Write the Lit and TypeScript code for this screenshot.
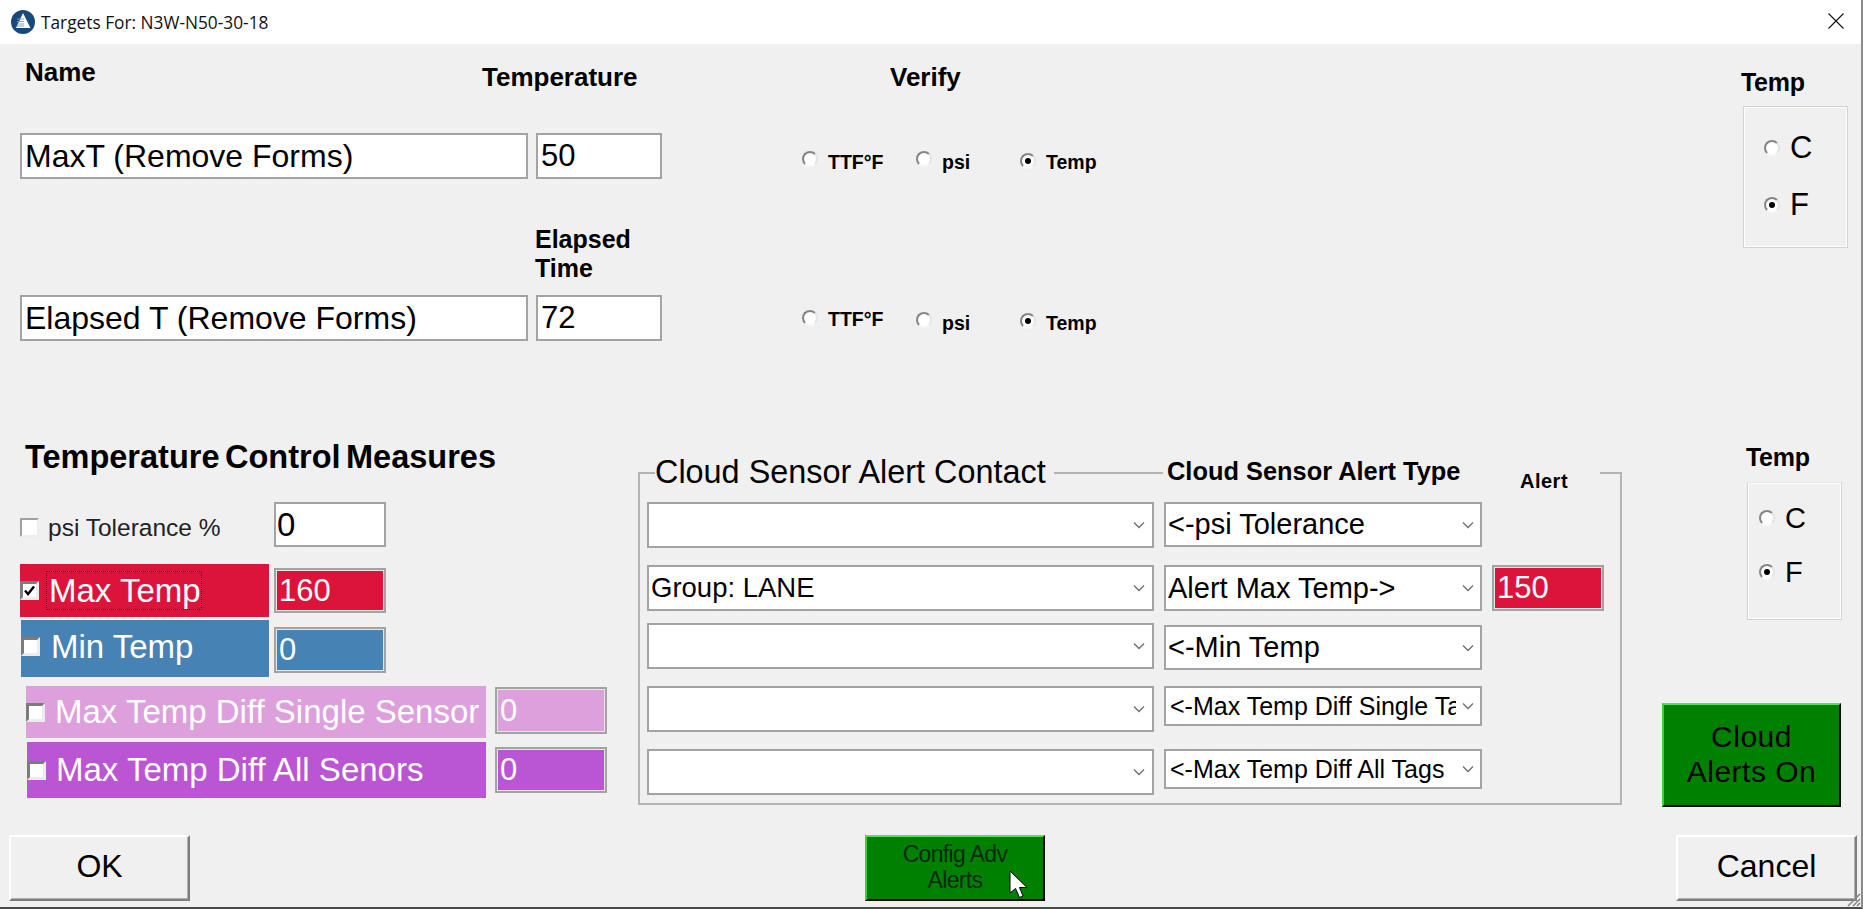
import { LitElement, html, css, svg } from "lit";
import { customElement } from "lit/decorators.js";

const chevron = html`<svg class="chev" width="12" height="8" viewBox="0 0 12 8"><path d="M1 1.5 L6 6.5 L11 1.5" fill="none" stroke="#6e6e6e" stroke-width="1.3"/></svg>`;

@customElement("app-root")
export class AppRoot extends LitElement {
  static styles = css`
    :host { display: block; width: 1863px; height: 909px; font-family: "Liberation Sans", Arial, sans-serif; color: #000; background: #f0f0f0; overflow: hidden; }
    * { box-sizing: border-box; }
    .window { width: 1863px; height: 909px; display: flex; flex-direction: column; border-right: 2px solid #8c8c8c; border-bottom: 2px solid #4a4a4a; position: relative; overflow: hidden; }
    .title { height: 44px; background: #fff; display: flex; align-items: center; flex: none; }
    .logo { margin-left: 11px; flex: none; }
    .title span { margin-left: 6px; font-family: "Open Sans", sans-serif; font-size: 17.3px; color: #111; }
    .close { margin-left: auto; margin-right: 17px; margin-top: -3px; }

    .upper { height: 395px; display: flex; justify-content: space-between; flex: none; }
    .targets { padding-left: 20px; display: flex; flex-direction: column; }
    .b { font-weight: 700; }
    .h { font-size: 26px; line-height: 30px; white-space: nowrap; }
    .head1 { height: 89px; display: flex; align-items: flex-start; }
    .name-lbl { margin-left: 5px; margin-top: 13px; width: 457px; }
    .temp-lbl { margin-top: 18px; width: 408px; }
    .verify-lbl { margin-top: 18px; }
    .head2 { height: 116px; padding: 46px 0 0 515px; }
    .head2 div { font-size: 25px; line-height: 29px; }
    .row { display: flex; height: 46px; }
    input { display: block; font-family: inherit; padding: 0 0 0 3px; margin: 0; outline: none; background: #fff; color: #000; border: 2px solid #a3a3a3; border-radius: 0; }
    .name { width: 508px; height: 46px; font-size: 32px; margin-right: 8px; }
    .val { width: 126px; height: 46px; font-size: 31px; margin-right: 140px; }
    .opt { display: flex; align-items: flex-start; height: 46px; font-weight: 700; font-size: 19.5px; line-height: 22px; }
    .w-ttf { width: 114px; }
    .w-psi { width: 104px; }
    .opt .radio { margin-right: 10px; }
    .m13 { margin-top: 13px; } .m15 { margin-top: 15px; } .m17 { margin-top: 17px; }
    .m18 { margin-top: 18px; } .m20 { margin-top: 20px; }

    .radio { width: 16px; height: 16px; flex: none; border-radius: 50%; background: #fff; border: 2px solid; border-color: #858585 #e4e4e4 #f7f7f7 #858585; display: flex; align-items: center; justify-content: center; }
    .radio.on::after { content: ""; width: 6px; height: 6px; border-radius: 50%; background: #000; }

    .side1 { margin-right: 13px; margin-top: 23px; flex: none; width: 107px; }
    .side-lbl { font-size: 25px; line-height: 30px; font-weight: 700; letter-spacing: -0.3px; }
    .tbox { border: 1px solid #d2d2d2; box-shadow: inset 1px 1px 0 #fff, inset -1px -1px 0 #fff; display: flex; flex-direction: column; font-size: 31px; }
    .tbox1 { width: 105px; height: 142px; margin: 9px 0 0 2px; padding: 12px 0 0 20px; }
    .tbox1 .tr { height: 57px; }
    .tr { display: flex; align-items: center; gap: 10px; }
    .tbox2 { width: 95px; height: 138px; margin: 10px 0 0 85px; padding: 8px 0 0 11px; border-top-color: #e6e6e6; }
    .tbox2 .tr { height: 54px; font-size: 29px; }

    .lower { display: flex; align-items: flex-start; flex: none; height: 368px; }
    .measures { width: 638px; flex: none; padding: 0 0 0 20px; }
    .m-title { margin: 0 0 0 5px; font-size: 32.5px; line-height: 36px; font-weight: 700; white-space: nowrap; word-spacing: -3.5px; height: 36px; }
    .cb { width: 19px; height: 19px; flex: none; background: #fff; border: 3px solid; border-color: #7c7c7c #ececec #ececec #7c7c7c; display: flex; align-items: center; justify-content: center; }
    .cb svg { display: block; }
    .mrow { display: flex; }
    .mrow input { width: 112px; font-size: 31px; box-shadow: inset 0 0 0 1px #e6e6e6; }
    .plain { margin-top: 27px; height: 45px; }
    .plain .left { width: 254px; display: flex; align-items: center; font-size: 24.5px; color: #222; padding-top: 6px; }
    .plain .left .cb { border-color: #a0a0a0 #ededed #ededed #a0a0a0; border-width: 2px; margin-right: 9px; }
    .mrow.plain input { height: 45px; box-shadow: none; padding-left: 1px; font-size: 33px; }
    .bar { display: flex; align-items: center; color: #fff; font-size: 33px; white-space: nowrap; }
    .red { background: #dc143c; } .blue { background: #4682b4; } .plum { background: #dda0dd; } .orchid { background: #ba55d3; }
    input.red, input.blue, input.plum, input.orchid { color: #fff; }
    .r2 { margin-top: 17px; height: 53px; align-items: center; }
    .r2 .bar { width: 249px; height: 53px; margin-right: 5px; }
    .focus { margin-left: 7px; width: 156px; height: 39px; padding-left: 2px; line-height: 37px; border: 1px dotted #063b2e; }
    .r2 input { height: 45px; }
    .r3 { margin-top: 3px; height: 57px; margin-left: 1px; align-items: center; }
    .r3 .bar { width: 248px; height: 57px; margin-right: 5px; padding-bottom: 4px; }
    .r3 .txt { margin-left: 11px; }
    .r3 input { height: 46px; margin-top: 2px; }
    .r4 { margin-top: 9px; height: 52px; margin-left: 6px; align-items: flex-start; }
    .r4 .bar { width: 460px; height: 52px; margin-right: 9px; }
    .r4 .txt, .r5 .txt { margin-left: 10px; }
    .r4 input { height: 47px; margin-top: 1px; }
    .r5 { margin-top: 4px; height: 56px; margin-left: 7px; align-items: flex-start; }
    .r5 .bar { width: 459px; height: 56px; margin-right: 9px; }
    .r5 input { height: 46px; margin-top: 5px; }

    .group { position: relative; width: 984px; height: 333px; margin-top: 33px; flex: none; border: 2px solid #b4b4b4; padding: 28px 0 0 7px; }
    .legends { position: absolute; top: -19px; left: 15px; display: flex; align-items: flex-start; }
    .lg1 { width: 399px; background: #f0f0f0; font-size: 32.4px; line-height: 35px; height: 36px; white-space: nowrap; }
    .lg2 { margin-left: 109px; width: 437px; background: #f0f0f0; height: 36px; display: flex; white-space: nowrap; }
    .lg2 .ty { margin-left: 4px; font-size: 25.4px; line-height: 32px; font-weight: 700; width: 353px; }
    .lg2 .al { font-size: 20px; line-height: 28px; margin-top: 12px; font-weight: 700; letter-spacing: 0.5px; }
    .grid { display: grid; grid-template-columns: 507px 318px 112px; column-gap: 10px; grid-template-rows: 63px 58px 63px 63px 46px; align-items: start; }
    .sel { display: flex; align-items: center; height: 46px; background: #fff; border: 2px solid #a3a3a3; font-size: 29px; padding-left: 2px; overflow: hidden; white-space: nowrap; color: #000; }
    .sel span { flex: 1; min-width: 0; overflow: hidden; }
    .chev { flex: none; margin: 0 6px 0 6px; }
    .c1 .chev { margin-right: 7px; }
    .h45 { height: 45px; } .small { height: 40px; font-size: 25px; padding-left: 4px; }
    .low { margin-top: 2px; }
    .grp { font-size: 27.5px; }
    .ic { width: 112px; height: 46px; font-size: 31px; box-shadow: inset 0 0 0 1px #e6e6e6; }

    .right { flex: none; margin-left: 40px; width: 179px; padding-top: 3px; }
    .right .side-lbl { margin-left: 84px; }
    .green { background: #008000; border: 2px solid; border-color: #4ee64e #000 #000 #3fd03f; color: #000; font-family: inherit; display: flex; align-items: center; justify-content: center; text-align: center; padding: 0; }
    .on-btn { width: 179px; height: 104px; margin-top: 83px; font-size: 30px; line-height: 35px; letter-spacing: 0.5px; padding-bottom: 2px; }

    .footer { display: flex; margin-top: 28px; height: 66px; flex: none; }
    .btn { width: 181px; height: 66px; background: #f0f0f0; border: 2px solid; border-color: #fff #7d7d7d #7d7d7d #fff; box-shadow: inset -1px -1px 0 #b0b0b0; font-family: inherit; font-size: 32px; padding: 0 0 3px; color: #000; }
    .ok { margin-left: 9px; }
    .cfg { position: relative; margin-left: 675px; width: 180px; height: 66px; font-size: 23px; line-height: 26px; letter-spacing: -0.65px; color: #032b03; padding-bottom: 2px; }
    .cancel { margin-left: 631px; }
    .cursor { position: absolute; left: 142px; top: 33px; }
    .grip { position: absolute; right: 0; bottom: 0; }
  `;

  private radio(on: boolean, cls = "") {
    return html`<div class="radio ${on ? "on" : ""} ${cls}"></div>`;
  }

  private logo() {
    return html`<svg class="logo" width="24" height="24" viewBox="0 0 24 24">
      <circle cx="12" cy="12" r="12" fill="#17497a"/>
      <path d="M12 3 L19.5 18 L5 18 Z" fill="#fff"/>
      ${[9, 11.5, 14, 16].map((y) => svg`<path d="M6 ${y} H13" stroke="#7f9db8" stroke-width="0.9"/>`)}
    </svg>`;
  }

  render() {
    return html`<div class="window">
      <div class="title">
        ${this.logo()}
        <span>Targets For: N3W-N50-30-18</span>
        <svg class="close" width="16" height="16" viewBox="0 0 16 16"><path d="M0.5 0.5 L15.5 15.5 M15.5 0.5 L0.5 15.5" stroke="#111" stroke-width="1.1"/></svg>
      </div>

      <div class="upper">
        <div class="targets">
          <div class="head1">
            <div class="h b name-lbl">Name</div>
            <div class="h b temp-lbl">Temperature</div>
            <div class="h b verify-lbl">Verify</div>
          </div>
          <div class="row">
            <input class="name" .value=${"MaxT (Remove Forms)"} />
            <input class="val" .value=${"50"} />
            <div class="opt w-ttf">${this.radio(false, "m18")}<span class="m18">TTF°F</span></div>
            <div class="opt w-psi">${this.radio(false, "m18")}<span class="m18">psi</span></div>
            <div class="opt">${this.radio(true, "m20")}<span class="m18">Temp</span></div>
          </div>
          <div class="head2"><div class="b">Elapsed<br />Time</div></div>
          <div class="row">
            <input class="name" .value=${"Elapsed T (Remove Forms)"} />
            <input class="val" .value=${"72"} />
            <div class="opt w-ttf">${this.radio(false, "m15")}<span class="m13">TTF°F</span></div>
            <div class="opt w-psi">${this.radio(false, "m17")}<span class="m17">psi</span></div>
            <div class="opt">${this.radio(true, "m18")}<span class="m17">Temp</span></div>
          </div>
        </div>
        <div class="side1">
          <div class="side-lbl">Temp</div>
          <div class="tbox tbox1">
            <div class="tr">${this.radio(false)}<span>C</span></div>
            <div class="tr">${this.radio(true)}<span>F</span></div>
          </div>
        </div>
      </div>

      <div class="lower">
        <div class="measures">
          <div class="m-title">Temperature Control Measures</div>
          <div class="mrow plain">
            <div class="left"><div class="cb"></div><span>psi Tolerance %</span></div>
            <input .value=${"0"} />
          </div>
          <div class="mrow r2">
            <div class="bar red">
              <div class="cb"><svg width="13" height="13" viewBox="0 0 13 13"><path d="M2 6.5 L5 10 L11 2.5" fill="none" stroke="#000" stroke-width="2.4"/></svg></div>
              <div class="focus">Max Temp</div>
            </div>
            <input class="red" .value=${"160"} />
          </div>
          <div class="mrow r3">
            <div class="bar blue"><div class="cb"></div><div class="txt">Min Temp</div></div>
            <input class="blue" .value=${"0"} />
          </div>
          <div class="mrow r4">
            <div class="bar plum"><div class="cb"></div><div class="txt">Max Temp Diff Single Sensor</div></div>
            <input class="plum" .value=${"0"} />
          </div>
          <div class="mrow r5">
            <div class="bar orchid"><div class="cb"></div><div class="txt">Max Temp Diff All Senors</div></div>
            <input class="orchid" .value=${"0"} />
          </div>
        </div>

        <div class="group">
          <div class="legends">
            <div class="lg1">Cloud Sensor Alert Contact</div>
            <div class="lg2"><div class="ty">Cloud Sensor Alert Type</div><div class="al">Alert</div></div>
          </div>
          <div class="grid">
            <div class="sel c1"><span></span>${chevron}</div>
            <div class="sel h45"><span>&lt;-psi Tolerance</span>${chevron}</div>
            <div></div>
            <div class="sel c1"><span class="grp">Group: LANE</span>${chevron}</div>
            <div class="sel"><span>Alert Max Temp-&gt;</span>${chevron}</div>
            <input class="ic red" .value=${"150"} />
            <div class="sel c1"><span></span>${chevron}</div>
            <div class="sel h45 low"><span>&lt;-Min Temp</span>${chevron}</div>
            <div></div>
            <div class="sel c1"><span></span>${chevron}</div>
            <div class="sel small"><span>&lt;-Max Temp Diff Single Tags</span>${chevron}</div>
            <div></div>
            <div class="sel c1"><span></span>${chevron}</div>
            <div class="sel small"><span>&lt;-Max Temp Diff All Tags</span>${chevron}</div>
            <div></div>
          </div>
        </div>

        <div class="right">
          <div class="side-lbl">Temp</div>
          <div class="tbox tbox2">
            <div class="tr">${this.radio(false)}<span>C</span></div>
            <div class="tr">${this.radio(true)}<span>F</span></div>
          </div>
          <button class="green on-btn">Cloud<br />Alerts On</button>
        </div>
      </div>

      <div class="footer">
        <button class="btn ok">OK</button>
        <button class="green cfg">Config Adv<br />Alerts
          <svg class="cursor" width="22" height="30" viewBox="0 0 22 30"><path d="M1 1 L1 23 L6.5 18.5 L10.5 27.5 L14 26 L10.5 17.5 L18 17.5 Z" fill="#fff" stroke="#000" stroke-width="1"/></svg>
        </button>
        <button class="btn cancel">Cancel</button>
      </div>
      <svg class="grip" width="18" height="18" viewBox="0 0 18 18">
        <path d="M17 5 L5 17 M17 10 L10 17 M17 14 L14 17" stroke="#8a8a8a" stroke-width="1.6"/>
      </svg>
    </div>`;
  }
}
